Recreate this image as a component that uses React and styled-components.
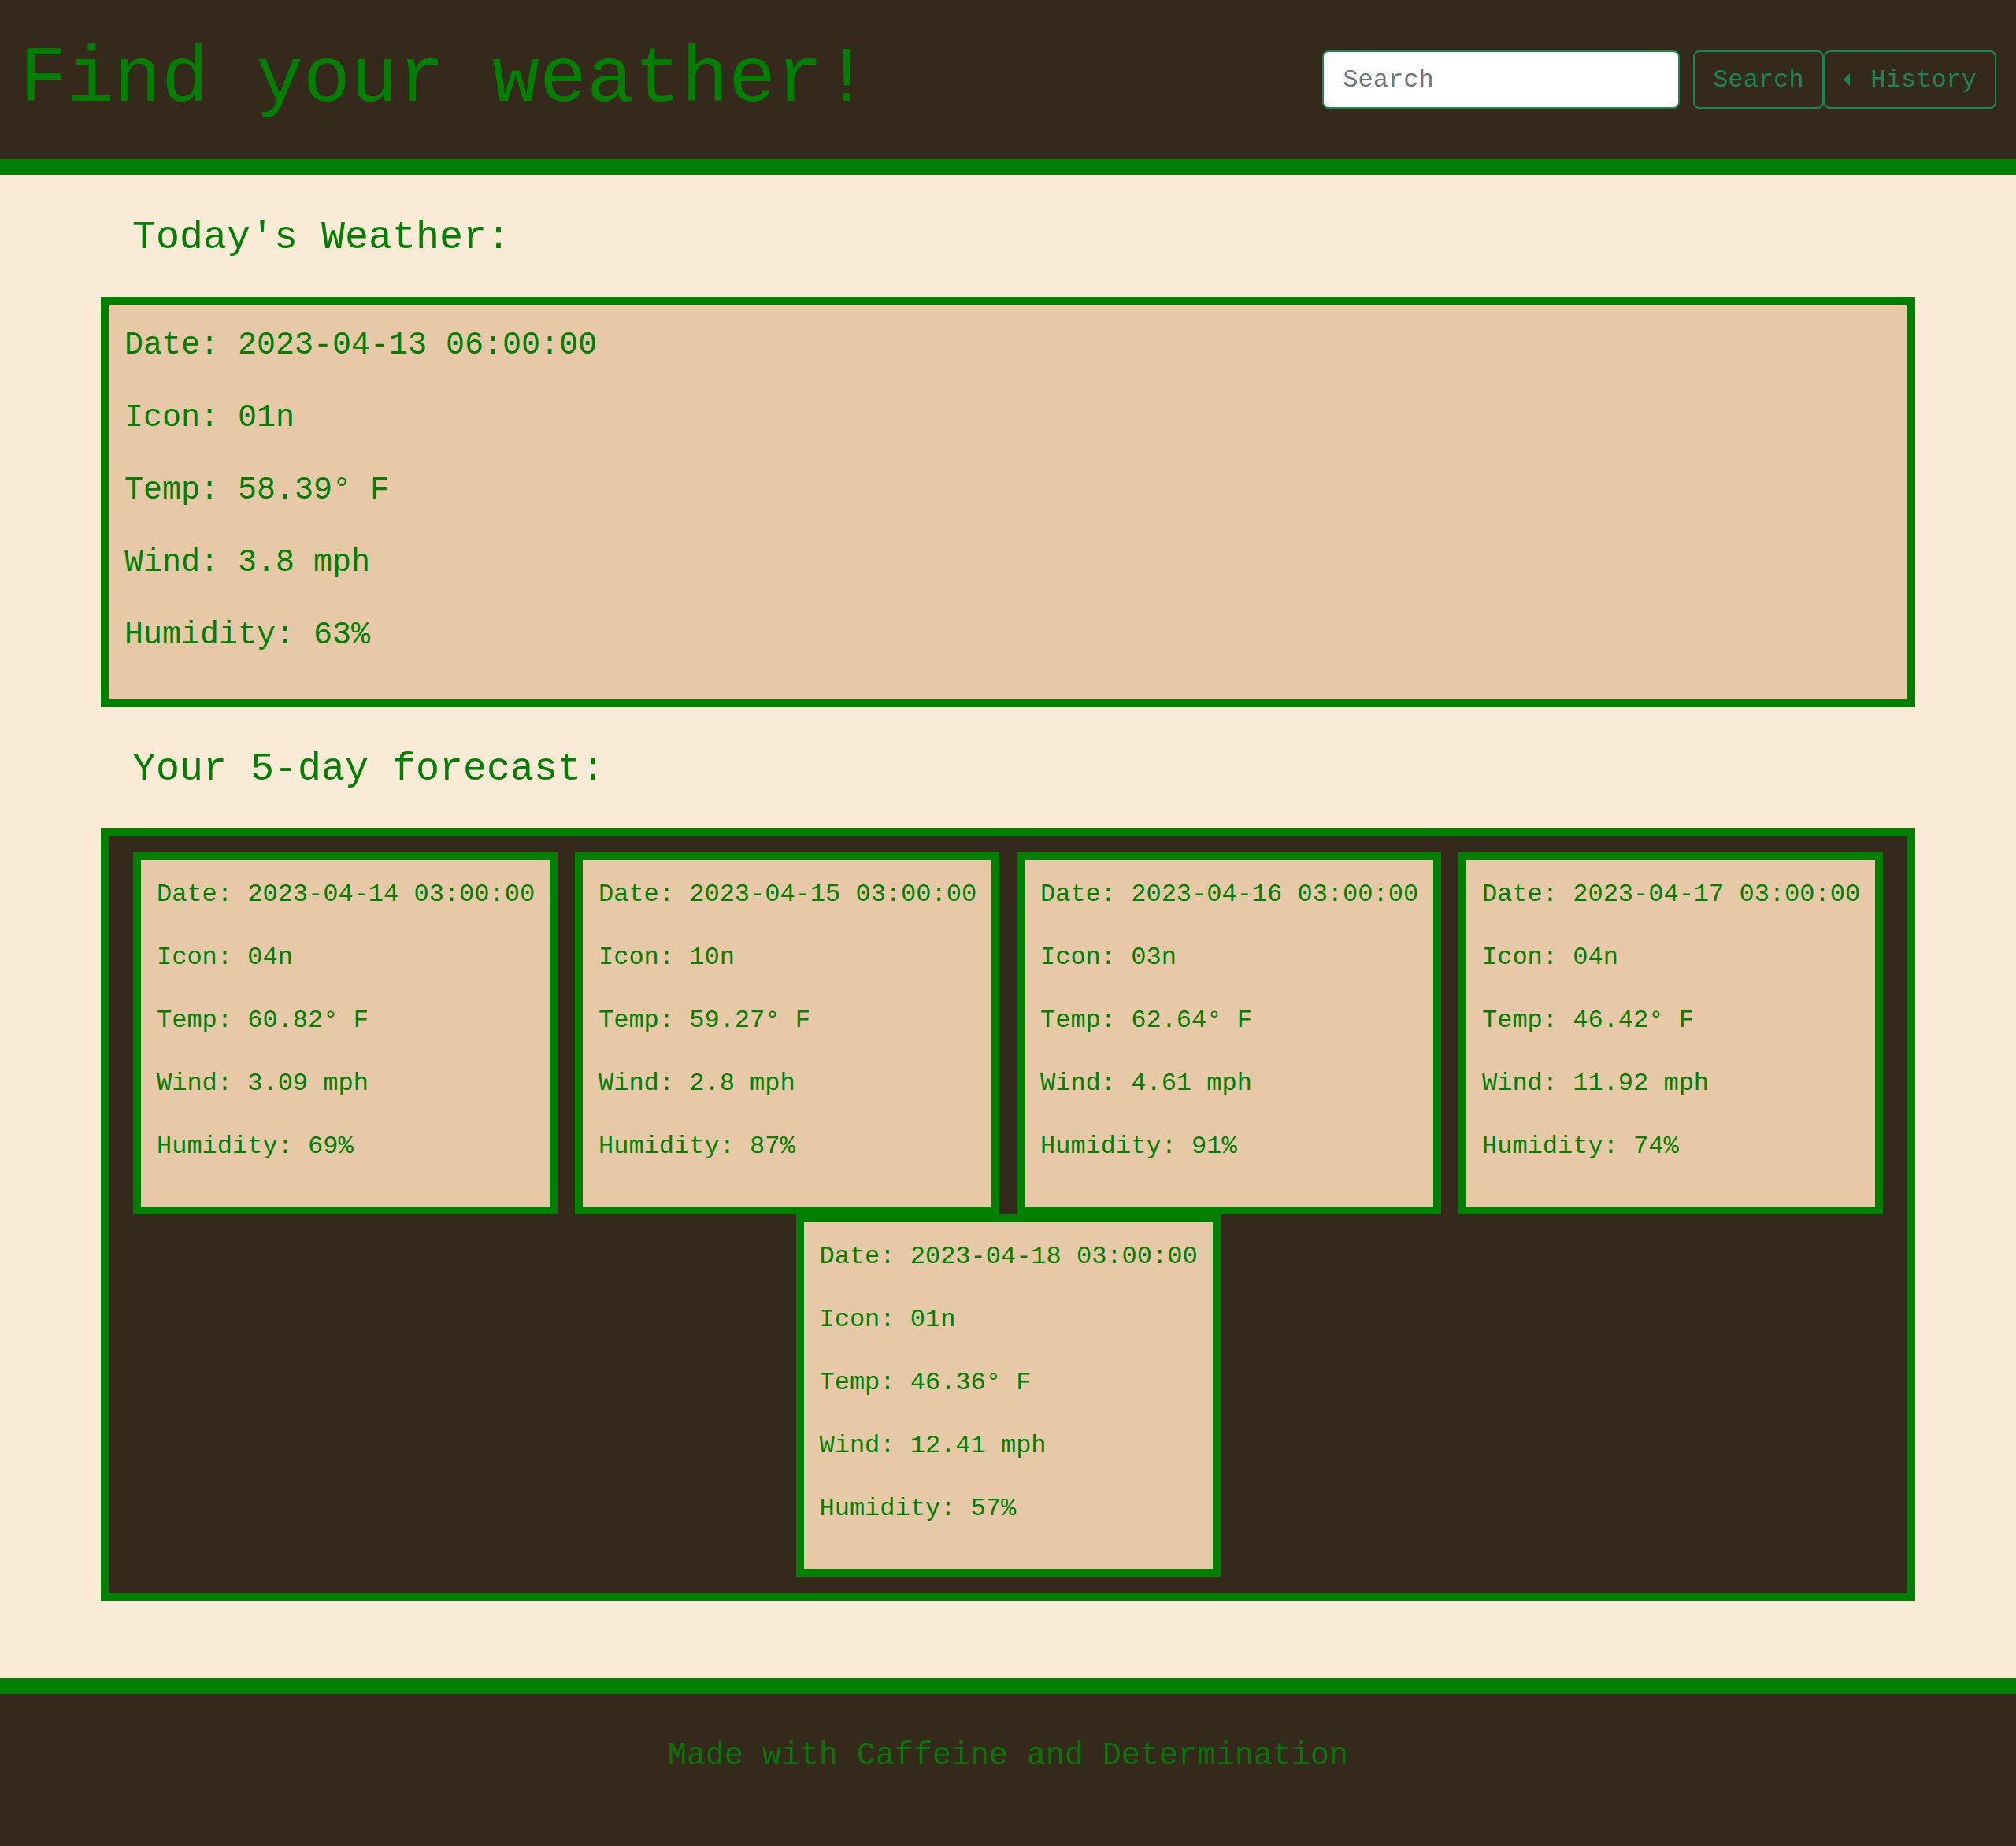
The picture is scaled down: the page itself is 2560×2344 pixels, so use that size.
import React from 'react';
import styled, { createGlobalStyle } from 'styled-components';

const GlobalStyle = createGlobalStyle`
  body {
    margin: 0;
    background: #35291b;
    font-family: "Courier New", Courier, "Nimbus Mono PS", "Nimbus Mono L", FreeMono, "Liberation Mono", monospace;
  }
`;

const Header = styled.header`
  height: 202px;
  padding: 0 25px;
  display: flex;
  align-items: center;
  justify-content: space-between;
  background: #35291b;
  border-bottom: 20px solid #008000;
`;

const Title = styled.h1`
  margin: 0;
  font-size: 100px;
  font-weight: normal;
  line-height: normal;
  color: #008000;
`;

const SearchForm = styled.form`
  display: flex;
  align-items: center;
`;

const SearchInput = styled.input`
  width: 454px;
  height: 74px;
  box-sizing: border-box;
  margin-right: 17px;
  padding: 0 24px;
  font-family: inherit;
  font-size: 32px;
  color: #212529;
  background: #fff;
  border: 2px solid #198754;
  border-radius: 8px;
  outline: none;

  &::placeholder {
    color: #6c757d;
  }
`;

const OutlineButton = styled.button`
  height: 74px;
  box-sizing: border-box;
  padding: 0 23px;
  display: flex;
  align-items: center;
  gap: ${(p) => p.$gap || 0}px;
  font-family: inherit;
  font-size: 32px;
  color: #198754;
  background: transparent;
  border: 2px solid #198754;
  border-radius: 8px;
  cursor: pointer;
`;

const Main = styled.main`
  background: #faebd7;
  padding: 51px 0 98px;
  display: flex;
  flex-direction: column;
  align-items: center;
`;

const SectionTitle = styled.h2`
  width: 90%;
  box-sizing: border-box;
  margin: 0 0 ${(p) => p.$after}px;
  padding-left: 40px;
  font-size: 50px;
  font-weight: normal;
  line-height: normal;
  color: #008000;
`;

const TodayCard = styled.section`
  width: 90%;
  box-sizing: border-box;
  margin-bottom: 50px;
  padding: 26px 20px 23px;
  background: #e8c9a7;
  border: 10px solid #008000;
`;

const InfoLine = styled.p`
  margin: 0 0 ${(p) => p.$gap}px;
  font-size: ${(p) => p.$size}px;
  line-height: ${(p) => p.$line}px;
  white-space: nowrap;
  color: #008000;
`;

const ForecastGrid = styled.section`
  width: 90%;
  box-sizing: border-box;
  padding: 20px 19px 21px;
  display: flex;
  flex-wrap: wrap;
  justify-content: center;
  background: #35291b;
  border: 10px solid #008000;
`;

const ForecastCard = styled.div`
  flex: 0 0 539px;
  box-sizing: border-box;
  margin: 0 11px;
  padding: 20px 18px 28px 20px;
  background: #e8c9a7;
  border: 10px solid #008000;
`;

const Footer = styled.footer`
  padding: 56px 0 91px;
  text-align: center;
  font-size: 40px;
  line-height: 45px;
  color: #0a730a;
  background: #35291b;
  border-top: 20px solid #008000;
`;

const today = {
  date: '2023-04-13 06:00:00',
  icon: '01n',
  temp: '58.39',
  wind: '3.8',
  humidity: '63',
};

const forecast = [
  { date: '2023-04-14 03:00:00', icon: '04n', temp: '60.82', wind: '3.09', humidity: '69' },
  { date: '2023-04-15 03:00:00', icon: '10n', temp: '59.27', wind: '2.8', humidity: '87' },
  { date: '2023-04-16 03:00:00', icon: '03n', temp: '62.64', wind: '4.61', humidity: '91' },
  { date: '2023-04-17 03:00:00', icon: '04n', temp: '46.42', wind: '11.92', humidity: '74' },
  { date: '2023-04-18 03:00:00', icon: '01n', temp: '46.36', wind: '12.41', humidity: '57' },
];

function WeatherLines({ data, size, line, gap }) {
  const rows = [
    `Date: ${data.date}`,
    `Icon: ${data.icon}`,
    `Temp: ${data.temp}° F`,
    `Wind: ${data.wind} mph`,
    `Humidity: ${data.humidity}%`,
  ];
  return rows.map((text, i) => (
    <InfoLine key={i} $size={size} $line={line} $gap={i === rows.length - 1 ? gap - 8 : gap}>
      {text}
    </InfoLine>
  ));
}

export default function App() {
  return (
    <>
      <GlobalStyle />
      <Header>
        <Title>Find your weather!</Title>
        <SearchForm onSubmit={(e) => e.preventDefault()}>
          <SearchInput type="text" placeholder="Search" />
          <OutlineButton type="submit">Search</OutlineButton>
          <OutlineButton type="button" $gap={27}>
            <svg width="8" height="16" viewBox="0 0 8 16" fill="#198754">
              <path d="M0 8 L8 0 L8 16 Z" />
            </svg>
            History
          </OutlineButton>
        </SearchForm>
      </Header>

      <Main>
        <SectionTitle $after={47}>Today's Weather:</SectionTitle>
        <TodayCard>
          <WeatherLines data={today} size={40} line={52} gap={40} />
        </TodayCard>

        <SectionTitle $after={47}>Your 5-day forecast:</SectionTitle>
        <ForecastGrid>
          {forecast.map((day) => (
            <ForecastCard key={day.date}>
              <WeatherLines data={day} size={32} line={48} gap={32} />
            </ForecastCard>
          ))}
        </ForecastGrid>
      </Main>

      <Footer>Made with Caffeine and Determination</Footer>
    </>
  );
}
